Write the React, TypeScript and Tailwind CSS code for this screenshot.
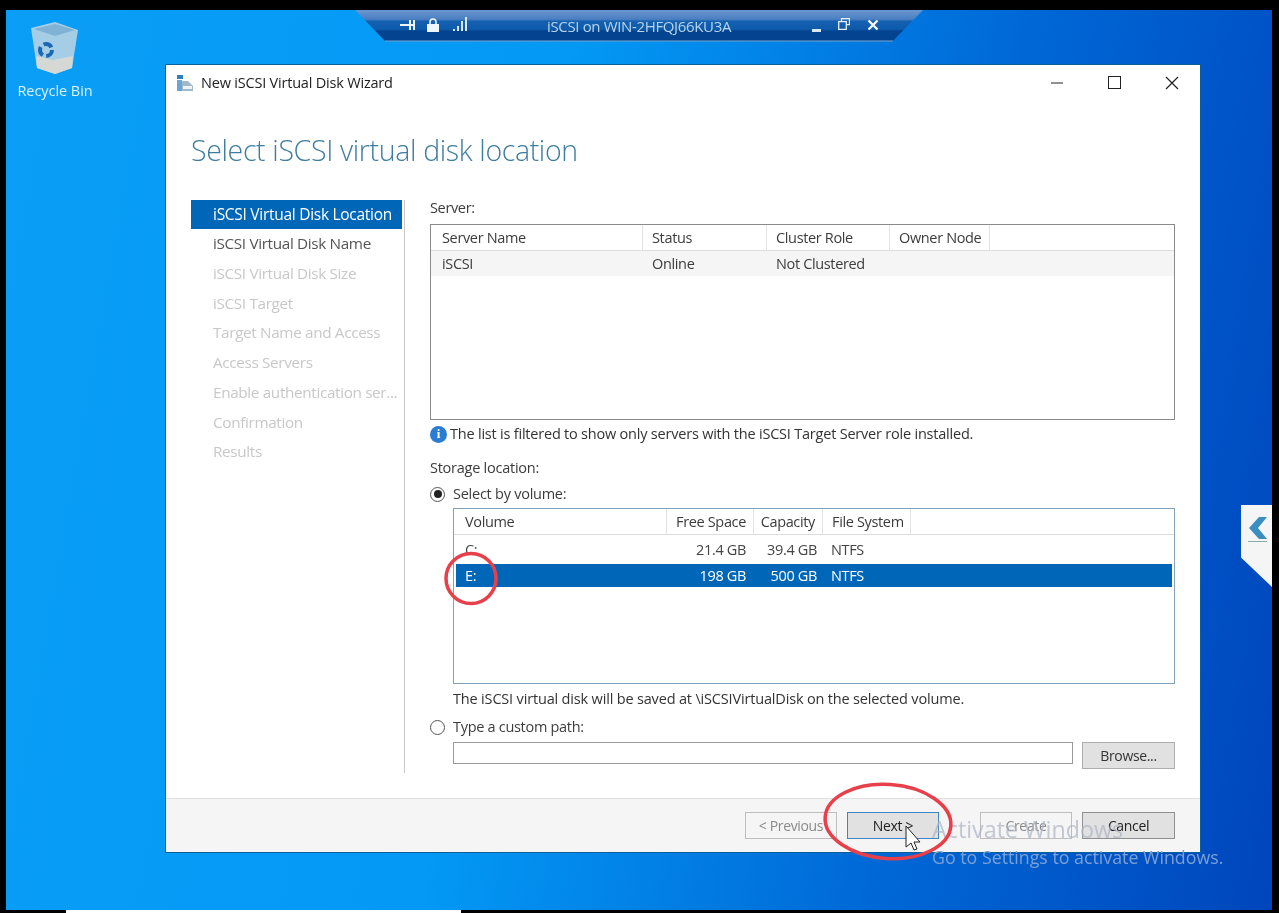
const steps = [
  "iSCSI Virtual Disk Name",
  "iSCSI Virtual Disk Size",
  "iSCSI Target",
  "Target Name and Access",
  "Access Servers",
  "Enable authentication ser...",
  "Confirmation",
  "Results",
];

function HeaderCell({ width, right, children }: { width: string; right?: boolean; children?: React.ReactNode }) {
  return (
    <div className={`${width} flex h-full items-center whitespace-nowrap border-r border-[#e3e3e3] px-[9px] ${right ? "justify-end pr-[7px]" : ""}`}>
      {children}
    </div>
  );
}

function Button({ label, className }: { label: string; className: string }) {
  return (
    <div className={`flex h-[27px] w-[92px] items-center justify-center border text-[14px] ${className}`}>{label}</div>
  );
}

function Radio({ checked }: { checked?: boolean }) {
  return (
    <span className="flex size-[15px] items-center justify-center rounded-full border border-[#555] bg-white">
      {checked && <span className="size-[8px] rounded-full bg-[#222]" />}
    </span>
  );
}

function Wizard() {
  return (
    <div className="absolute left-[159px] top-[54px] flex h-[789px] w-[1036px] flex-col border border-[#0b5f96] bg-white text-[#3c3c3c]">
      <div className="flex h-[35px] shrink-0 items-center pl-[10px]">
        <svg width="18" height="18" viewBox="0 0 18 18" className="mr-[7px]">
          <rect x="1" y="1" width="6" height="4" fill="#2f7fc4" />
          <rect x="1" y="6" width="5" height="11" fill="#6aa5d8" />
          <path d="M6 7h6l5 5v5H6z" fill="#9fb8cc" />
          <rect x="7" y="12" width="9" height="3" fill="#f2f2f2" />
        </svg>
        <span className="text-[14.5px] tracking-[-0.2px] text-[#222]">New iSCSI Virtual Disk Wizard</span>
        <div className="ml-auto flex items-center text-[#222]">
          <svg width="12" height="12" viewBox="0 0 12 12" className="mr-[45px]"><path d="M0 6h12" stroke="#222" /></svg>
          <svg width="13" height="13" viewBox="0 0 13 13" className="mr-[44px]"><rect x=".5" y=".5" width="12" height="12" fill="none" stroke="#222" /></svg>
          <svg width="14" height="14" viewBox="0 0 14 14" className="mr-[21px]"><path d="M1 1l12 12M13 1L1 13" stroke="#222" strokeWidth="1.2" /></svg>
        </div>
      </div>

      <div className="h-[64px] shrink-0 pl-[25px] pt-[30px] text-[28.5px] font-light leading-[40px] text-[#3f7d9f]">
        Select iSCSI virtual disk location
      </div>

      <div className="flex min-h-0 flex-1 pl-[25px] pt-[36px]">
        <div className="h-[573px] w-[214px] shrink-0 border-r border-[#c8c8c8] pr-[1px]">
          <div className="flex h-[29px] w-[211px] items-center bg-[#0067b8] pl-[22px] text-[15.5px] tracking-[-0.28px] text-white">
            iSCSI Virtual Disk Location
          </div>
          {steps.map((step, i) => (
            <div
              key={step}
              className={`flex h-[29.7px] items-center pl-[22px] text-[15.3px] ${i === 0 ? "text-[#555]" : "text-[#c8c8c8]"}`}
            >
              {step}
            </div>
          ))}
        </div>

        <div className="ml-[25px] w-[745px] text-[14.5px]">
          <div className="h-[24px] leading-[16px]">Server:</div>
          <div className="h-[196px] border border-[#8a8a8a]">
            <div className="flex h-[26px] items-center border-b border-[#dcdcdc]">
              <HeaderCell width="w-[212px] pl-[11px]">Server Name</HeaderCell>
              <HeaderCell width="w-[124px]">Status</HeaderCell>
              <HeaderCell width="w-[123px]">Cluster Role</HeaderCell>
              <HeaderCell width="w-[100px]">Owner Node</HeaderCell>
            </div>
            <div className="flex h-[25px] items-center bg-[#f5f5f5]">
              <div className="w-[212px] pl-[11px]">iSCSI</div>
              <div className="w-[124px] pl-[9px]">Online</div>
              <div className="pl-[9px]">Not Clustered</div>
            </div>
          </div>

          <div className="flex h-[28px] items-center tracking-[-0.21px] text-[#333]">
            <span className="mr-[3px] flex size-[17px] items-center justify-center rounded-full bg-[#2b7cd3] font-['Liberation_Serif',serif] text-[13px] font-bold text-white">
              i
            </span>
            The list is filtered to show only servers with the iSCSI Target Server role installed.
          </div>

          <div className="mt-[7px] flex h-[26px] items-center tracking-[-0.25px]">Storage location:</div>
          <div className="flex h-[26px] items-center gap-[8px] tracking-[-0.25px]">
            <Radio checked />
            <span>Select by volume:</span>
          </div>

          <div className="ml-[23px] mt-[1px] h-[176px] border border-[#82a3b8]">
            <div className="flex h-[26px] items-center border-b border-[#dcdcdc]">
              <HeaderCell width="w-[213px] pl-[11px]">Volume</HeaderCell>
              <HeaderCell width="w-[87px]" right>Free Space</HeaderCell>
              <HeaderCell width="w-[69px]" right>Capacity</HeaderCell>
              <HeaderCell width="w-[88px]">File System</HeaderCell>
            </div>
            {[
              ["C:", "21.4 GB", "39.4 GB", "NTFS"],
              ["E:", "198 GB", "500 GB", "NTFS"],
            ].map((row, i) => (
              <div
                key={row[0]}
                className={`mx-[2px] flex items-center ${i === 1 ? "h-[23px] bg-[#0067b8] text-white" : "h-[29px] text-[#444]"}`}
              >
                <div className="w-[209px] pl-[9px]">{row[0]}</div>
                <div className="w-[84px] pr-[3px] text-right">{row[1]}</div>
                <div className="w-[69px] pr-[1px] text-right">{row[2]}</div>
                <div className="pl-[13px]">{row[3]}</div>
              </div>
            ))}
          </div>

          <div className="ml-[23px] flex h-[30px] items-center tracking-[-0.17px] text-[#333]">
            The iSCSI virtual disk will be saved at \iSCSIVirtualDisk on the selected volume.
          </div>
          <div className="flex h-[26px] items-center gap-[8px] tracking-[-0.3px]">
            <Radio />
            <span>Type a custom path:</span>
          </div>
          <div className="ml-[23px] mt-[2px] flex items-start">
            <div className="h-[22px] w-[620px] border border-[#999]" />
            <Button label="Browse..." className="ml-[9px] h-[24px] w-[93px] border-[#adadad] bg-[#e1e1e1] text-[#333]" />
          </div>
        </div>
      </div>

      <div className="flex h-[54px] shrink-0 items-center border-t border-[#e0e0e0] bg-[#f5f5f5] pl-[579px]">
        <Button label="< Previous" className="border-[#bdbdbd] text-[#8a8a8a]" />
        <Button label="Next >" className="ml-[10px] border-[#3c86c8] bg-[#e1e1e1] text-[#222]" />
        <Button label="Create" className="ml-[41px] border-[#bdbdbd] text-[#8a8a8a]" />
        <Button label="Cancel" className="ml-[10px] w-[93px] border-[#8f8f8f] bg-[#e1e1e1] text-[#222]" />
      </div>
    </div>
  );
}

export default function App() {
  return (
    <div className="h-[913px] w-[1279px] overflow-hidden bg-black pl-[6px] pr-[7px] pt-[10px] font-['Open_Sans','Noto_Sans',sans-serif] tracking-[-0.35px]">
      <div className="relative h-[900px] w-[1266px] overflow-hidden bg-[linear-gradient(100deg,#0a9ef6_0%,#0399f5_40%,#0068d6_72%,#0045bc_100%)] blur-[0.35px]">
        {/* recycle bin */}
        <div className="absolute left-[11px] top-[12px] flex w-[76px] flex-col items-center text-[14.5px] tracking-[-0.05px] text-[#d8f0ff]">
          <svg width="48" height="53" viewBox="0 0 48 53">
            <path d="M0 6L24 0l23 8-6 38-17 6-18-6z" fill="#a5cde6" />
            <path d="M3 7L24 2l20 6-20 6z" fill="#7fb2d3" />
            <path d="M5 34l17 4 20-4-1 12-17 6-18-6z" fill="#d6d8d6" />
            <circle cx="15" cy="28" r="6" fill="none" stroke="#1a68b4" strokeWidth="4" strokeDasharray="9 3.5" />
          </svg>
          <span className="mt-[7px] leading-[18px]">Recycle Bin</span>
        </div>

        {/* remote connection bar */}
        <div className="absolute left-[349px] top-0 h-[32px] w-[568px]">
          <svg width="568" height="32" viewBox="0 0 568 32" className="absolute inset-0">
            <defs>
              <linearGradient id="bar" x1="0" y1="0" x2="0" y2="1">
                <stop offset="0" stopColor="#6a97cf" />
                <stop offset="0.3" stopColor="#4a7fc2" />
                <stop offset="0.36" stopColor="#1660b0" />
                <stop offset="0.62" stopColor="#0d5aab" />
                <stop offset="0.68" stopColor="#03438f" />
                <stop offset="1" stopColor="#03438f" />
              </linearGradient>
            </defs>
            <path d="M0 0h568l-30 31H30z" fill="url(#bar)" />
            <path d="M30 31h508" stroke="#7ba3c7" />
          </svg>
          <svg width="15" height="12" viewBox="0 0 15 12" className="absolute left-[45px] top-[9px]">
            <path d="M0 6h10M10 1v10M14 1v10M10 6h4" stroke="#eef5fb" strokeWidth="2" />
          </svg>
          <svg width="12" height="14" viewBox="0 0 12 14" className="absolute left-[72px] top-[8px]">
            <rect x="0" y="6" width="12" height="8" fill="#eef5fb" />
            <path d="M3 6V4a3 3 0 0 1 6 0v2" fill="none" stroke="#eef5fb" strokeWidth="1.6" />
          </svg>
          <svg width="16" height="14" viewBox="0 0 16 14" className="absolute left-[98px] top-[7px]">
            <path d="M1 14v-2M5 14V9M9 14V4M13 14V0" stroke="#dbe8f3" strokeWidth="2" />
          </svg>
          <div className="absolute inset-x-0 top-[6px] text-center text-[15px] leading-[20px] text-[#b8d4ea]">
            iSCSI on WIN-2HFQJ66KU3A
          </div>
          <svg width="10" height="4" viewBox="0 0 10 4" className="absolute left-[457px] top-[19px]">
            <rect width="9" height="3" fill="#dbe8f3" />
          </svg>
          <svg width="12" height="12" viewBox="0 0 12 12" className="absolute left-[483px] top-[8px]">
            <path d="M3.5 3V.7h8v6H9M.7 3.7h7.6v7.6H.7z" fill="none" stroke="#e6f0f8" strokeWidth="1.3" />
          </svg>
          <svg width="12" height="12" viewBox="0 0 12 12" className="absolute left-[512px] top-[9px]">
            <path d="M1.5 1.5l9 9M10.5 1.5l-9 9" stroke="#f2f7fb" strokeWidth="2.4" />
          </svg>
        </div>

        <Wizard />

        {/* watermark */}
        <div className="pointer-events-none absolute left-[926px] top-[803px] tracking-normal text-[#a9b4c4]/70">
          <div className="text-[23.3px] leading-[32px]">Activate Windows</div>
          <div className="whitespace-nowrap text-[17.8px] leading-[24px] text-[#7ba0d4]">Go to Settings to activate Windows.</div>
        </div>

        {/* annotations */}
        <svg width="1266" height="900" viewBox="0 0 1266 900" className="pointer-events-none absolute inset-0">
          <ellipse cx="465" cy="568.5" rx="25" ry="25" fill="none" stroke="#e8404a" strokeWidth="3.5" />
          <ellipse cx="882" cy="811.5" rx="63" ry="37" fill="none" stroke="#e8404a" strokeWidth="3.5" transform="rotate(4 882 811.5)" />
          <path d="M900 816v21l5-4 3 7 3-1-3-7h6z" fill="#fff" stroke="#222" strokeWidth="1" />
        </svg>

        {/* side tab */}
        <div className="absolute left-[1235px] top-[495px] h-[82px] w-[31px] bg-[#f5f5f5] pl-[7px] pt-[12px] [clip-path:polygon(0_0,100%_0,100%_100%,0_64%)]">
          <svg width="20" height="26" viewBox="0 0 20 26">
            <path d="M19 0h-8L1 11l10 11h8L10 11z" fill="#3a8fc0" />
            <path d="M0 24.5h19" stroke="#8aa" />
          </svg>
        </div>
      </div>
      <div className="flex h-[3px]">
        <div className="ml-[60px] w-[395px] bg-white" />
      </div>
    </div>
  );
}
